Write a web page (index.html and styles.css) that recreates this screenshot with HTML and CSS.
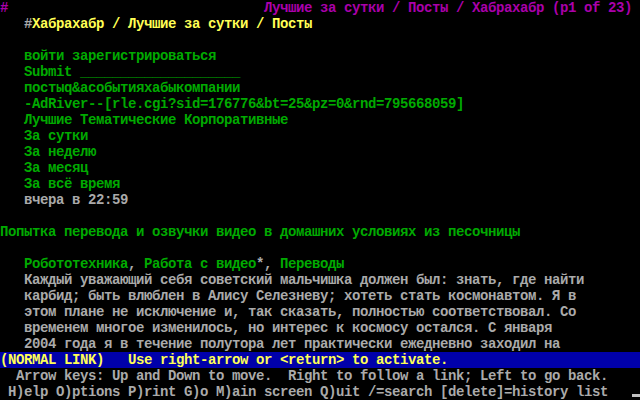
FILE: index.html
```html
<!DOCTYPE html>
<html lang="ru">
<head>
<meta charset="utf-8">
<title>Lynx</title>
<link rel="stylesheet" href="styles.css">
</head>
<body>
<div class="screen">
<div class="line mag">#                                Лучшие за сутки / Посты / Хабрахабр (p1 of 23)</div>
<div class="line">   <span class="gray">#</span><span class="yel">Хабрахабр / Лучшие за сутки / Посты</span></div>
<div class="line"></div>
<div class="line">   <span class="grn">войти зарегистрироваться</span></div>
<div class="line">   <span class="grn">Submit ____________________</span></div>
<div class="line">   <span class="grn">постыq&amp;асобытияхабыкомпании</span></div>
<div class="line">   <span class="grn">-AdRiver--[rle.cgi?sid=176776&amp;bt=25&amp;pz=0&amp;rnd=795668059]</span></div>
<div class="line">   <span class="grn">Лучшие Тематические Корпоративные</span></div>
<div class="line">   <span class="grn">За сутки</span></div>
<div class="line">   <span class="grn">За неделю</span></div>
<div class="line">   <span class="grn">За месяц</span></div>
<div class="line">   <span class="grn">За всё время</span></div>
<div class="line">   <span class="gray">вчера в 22:59</span></div>
<div class="line"></div>
<div class="line"><span class="grn">Попытка перевода и озвучки видео в домашних условиях из песочницы</span></div>
<div class="line"></div>
<div class="line">   <span class="grn">Робототехника</span><span class="gray">, </span><span class="grn">Работа с видео</span><span class="gray">*, </span><span class="grn">Переводы</span></div>
<div class="line">   <span class="gray">Каждый уважающий себя советский мальчишка должен был: знать, где найти</span></div>
<div class="line">   <span class="gray">карбид; быть влюблен в Алису Селезневу; хотеть стать космонавтом. Я в</span></div>
<div class="line">   <span class="gray">этом плане не исключение и, так сказать, полностью соответствовал. Со</span></div>
<div class="line">   <span class="gray">временем многое изменилось, но интерес к космосу остался. С января</span></div>
<div class="line">   <span class="gray">2004 года я в течение полутора лет практически ежедневно заходил на</span></div>
<div class="line status">(NORMAL LINK)   Use right-arrow or &lt;return&gt; to activate.</div>
<div class="line gray">  Arrow keys: Up and Down to move.  Right to follow a link; Left to go back.</div>
<div class="line gray"> H)elp O)ptions P)rint G)o M)ain screen Q)uit /=search [delete]=history list</div>
<div class="cursor"></div>
</div>
</body>
</html>
```
FILE: styles.css
```css
html, body {
  margin: 0;
  padding: 0;
  background: #000;
}
.screen {
  position: relative;
  width: 640px;
  height: 400px;
  overflow: hidden;
  background: #000;
  font-family: "Liberation Mono", "DejaVu Sans Mono", monospace;
  font-size: 14px;
  letter-spacing: -0.4014px;
  font-weight: bold;
  color: #aaaaaa;
}
.line {
  height: 16px;
  line-height: 17px;
  white-space: pre;
}
.mag { color: #aa00aa; }
.yel { color: #ffff55; }
.grn { color: #00aa00; }
.gray { color: #aaaaaa; }
.status {
  background: #0000aa;
  color: #ffff55;
}
.cursor {
  position: absolute;
  left: 632px;
  top: 394px;
  width: 8px;
  height: 3px;
  background: #c0c0c0;
}
```
